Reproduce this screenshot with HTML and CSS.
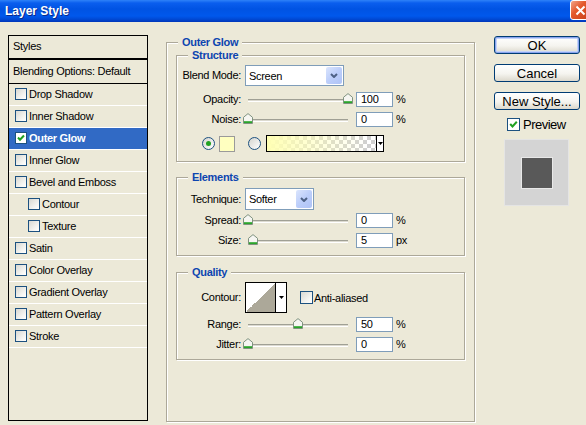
FILE: index.html
```html
<!doctype html>
<html lang="en">
  <head>
    <meta charset="UTF-8" />
    <meta name="viewport" content="width=device-width, initial-scale=1.0" />
    <title>Layer Style</title>
    <link rel="stylesheet" href="styles.css">
  </head>

  <body>
    <!-- Title bar -->
    <div class="titlebar">
      <span class="title">Layer Style</span>
      <span class="close">
        <svg width="11" height="11" viewBox="0 0 11 11"><path d="M1.5 1.5L9.5 9.5M9.5 1.5L1.5 9.5" stroke="#fff" stroke-width="2"/></svg>
      </span>
    </div>

    <div class="content">
      <!-- Styles list -->
      <ul class="styles-list">
        <li class="head first">Styles</li>
        <li class="head blending">Blending Options: Default</li>
        <li class="item"><span class="check"></span>Drop Shadow</li>
        <li class="item"><span class="check"></span>Inner Shadow</li>
        <li class="item selected">
          <span class="check on"><svg width="8" height="8" viewBox="0 0 8 8"><path d="M1 3.5L3 5.8L7 1.5" fill="none" stroke="#21a121" stroke-width="2"/></svg></span>Outer Glow
        </li>
        <li class="item"><span class="check"></span>Inner Glow</li>
        <li class="item"><span class="check"></span>Bevel and Emboss</li>
        <li class="item sub"><span class="check"></span>Contour</li>
        <li class="item sub"><span class="check"></span>Texture</li>
        <li class="item"><span class="check"></span>Satin</li>
        <li class="item"><span class="check"></span>Color Overlay</li>
        <li class="item"><span class="check"></span>Gradient Overlay</li>
        <li class="item"><span class="check"></span>Pattern Overlay</li>
        <li class="item"><span class="check"></span>Stroke</li>
      </ul>

      <!-- Outer Glow settings -->
      <div class="group main">
        <div class="group-title">Outer Glow</div>

        <!-- Structure -->
        <div class="group structure">
          <div class="group-title">Structure</div>

          <div class="row select-row">
            <span class="label">Blend Mode:</span>
            <span class="select blend">
              <span class="value">Screen</span>
              <span class="drop"><svg width="8" height="5" viewBox="0 0 8 5"><path d="M1 1L4 4L7 1" fill="none" stroke="#4d6185" stroke-width="2"/></svg></span>
            </span>
          </div>

          <div class="row gap3">
            <span class="label">Opacity:</span>
            <span class="slider">
              <span class="track"></span>
              <span class="thumb" style="left: 100px"><svg width="10" height="11" viewBox="0 0 10 11"><path d="M0.5 10.5V4.3L5 0.6L9.5 4.3V10.5Z" fill="#f6f6f2" stroke="#7f927f"/><path d="M1 8.2H9V10H1Z" fill="#2aa52a"/></svg></span>
            </span>
            <span class="field">100</span>
            <span class="unit">%</span>
          </div>

          <div class="row">
            <span class="label">Noise:</span>
            <span class="slider">
              <span class="track"></span>
              <span class="thumb" style="left: 0px"><svg width="10" height="11" viewBox="0 0 10 11"><path d="M0.5 10.5V4.3L5 0.6L9.5 4.3V10.5Z" fill="#f6f6f2" stroke="#7f927f"/><path d="M1 8.2H9V10H1Z" fill="#2aa52a"/></svg></span>
            </span>
            <span class="field">0</span>
            <span class="unit">%</span>
          </div>

          <div class="row color-row">
            <span class="radio on"></span>
            <span class="swatch"></span>
            <span class="radio second"></span>
            <span class="gradient-box">
              <span class="gradient"></span>
              <span class="arrow"><svg width="5" height="3" viewBox="0 0 5 3"><path d="M0 0H5L2.5 3Z" fill="#000"/></svg></span>
            </span>
          </div>
        </div>

        <!-- Elements -->
        <div class="group elements">
          <div class="group-title">Elements</div>

          <div class="row select-row tall">
            <span class="label">Technique:</span>
            <span class="select technique">
              <span class="value">Softer</span>
              <span class="drop"><svg width="8" height="5" viewBox="0 0 8 5"><path d="M1 1L4 4L7 1" fill="none" stroke="#4d6185" stroke-width="2"/></svg></span>
            </span>
          </div>

          <div class="row">
            <span class="label">Spread:</span>
            <span class="slider">
              <span class="track"></span>
              <span class="thumb" style="left: 0px"><svg width="10" height="11" viewBox="0 0 10 11"><path d="M0.5 10.5V4.3L5 0.6L9.5 4.3V10.5Z" fill="#f6f6f2" stroke="#7f927f"/><path d="M1 8.2H9V10H1Z" fill="#2aa52a"/></svg></span>
            </span>
            <span class="field">0</span>
            <span class="unit">%</span>
          </div>

          <div class="row">
            <span class="label">Size:</span>
            <span class="slider">
              <span class="track"></span>
              <span class="thumb" style="left: 5px"><svg width="10" height="11" viewBox="0 0 10 11"><path d="M0.5 10.5V4.3L5 0.6L9.5 4.3V10.5Z" fill="#f6f6f2" stroke="#7f927f"/><path d="M1 8.2H9V10H1Z" fill="#2aa52a"/></svg></span>
            </span>
            <span class="field">5</span>
            <span class="unit">px</span>
          </div>
        </div>

        <!-- Quality -->
        <div class="group quality">
          <div class="group-title">Quality</div>

          <div class="row contour-row">
            <span class="label">Contour:</span>
            <span class="contour">
              <span class="curve"></span>
              <span class="arrow"><svg width="5" height="3" viewBox="0 0 5 3"><path d="M0 0H5L2.5 3Z" fill="#000"/></svg></span>
            </span>
            <span class="check big"></span>
            <span class="check-label">Anti-aliased</span>
          </div>

          <div class="row gap1">
            <span class="label">Range:</span>
            <span class="slider">
              <span class="track"></span>
              <span class="thumb" style="left: 50px"><svg width="10" height="11" viewBox="0 0 10 11"><path d="M0.5 10.5V4.3L5 0.6L9.5 4.3V10.5Z" fill="#f6f6f2" stroke="#7f927f"/><path d="M1 8.2H9V10H1Z" fill="#2aa52a"/></svg></span>
            </span>
            <span class="field">50</span>
            <span class="unit">%</span>
          </div>

          <div class="row">
            <span class="label">Jitter:</span>
            <span class="slider">
              <span class="track"></span>
              <span class="thumb" style="left: 0px"><svg width="10" height="11" viewBox="0 0 10 11"><path d="M0.5 10.5V4.3L5 0.6L9.5 4.3V10.5Z" fill="#f6f6f2" stroke="#7f927f"/><path d="M1 8.2H9V10H1Z" fill="#2aa52a"/></svg></span>
            </span>
            <span class="field">0</span>
            <span class="unit">%</span>
          </div>
        </div>
      </div>

      <!-- Buttons and preview -->
      <div class="side">
        <div class="btn default">OK</div>
        <div class="btn">Cancel</div>
        <div class="btn">New Style...</div>

        <div class="preview-toggle">
          <span class="check big on"><svg width="9" height="9" viewBox="0 0 9 9"><path d="M1.2 4L3.5 6.5L7.8 1.8" fill="none" stroke="#21a121" stroke-width="2"/></svg></span>
          <span class="preview-label">Preview</span>
        </div>

        <div class="preview">
          <div class="preview-swatch"></div>
        </div>
      </div>
    </div>
  </body>
</html>
```

FILE: styles.css
```css
* {
  box-sizing: border-box;
}

html,
body {
  margin: 0;
  padding: 0;
}

body {
  width: 586px;
  height: 425px;
  overflow: hidden;
  background: #ece9d8;
  color: #000;
  font-family: "Liberation Sans", Arial, sans-serif;
  font-size: 11px;
  letter-spacing: -0.3px;
}

/* Title bar */
.titlebar {
  display: flex;
  align-items: center;
  height: 22px;
  background: linear-gradient(#2e82f8 0, #0a5eee 3px, #0053e3 9px, #0058ec 16px, #004ad6 19px, #0036b9 22px);
}

.title {
  padding-left: 5px;
  line-height: 20px;
  color: #fff;
  font-size: 12px;
  font-weight: bold;
  letter-spacing: 0;
  text-shadow: 1px 1px 0 #0b2a8a;
}

.close {
  display: flex;
  align-items: center;
  justify-content: center;
  align-self: flex-start;
  width: 21px;
  height: 20px;
  margin-left: auto;
  margin-right: -5px;
  border: 1px solid #fff;
  border-radius: 3px;
  background: linear-gradient(135deg, #f2a58a 0%, #e4582c 40%, #c8401c 100%);
}

.content {
  display: flex;
  align-items: flex-start;
  padding: 13px 0 0 8px;
}

/* Styles list */
.styles-list {
  flex: none;
  width: 140px;
  height: 386px;
  margin: 0;
  padding: 0;
  list-style: none;
  border: 1px solid #000;
}

.head {
  display: flex;
  align-items: center;
  height: 24px;
  padding: 0 0 2px 4px;
  border-bottom: 1px solid #000;
}

.head.first {
  border-bottom-width: 2px;
}

.item {
  display: flex;
  align-items: center;
  height: 22px;
  padding: 0 0 1px 6px;
  border-bottom: 1px solid #fff;
}

.item.sub {
  padding-left: 19px;
}

.item.selected {
  background: #316ac5;
  color: #fff;
  font-weight: bold;
}

.check {
  flex: none;
  display: flex;
  align-items: center;
  justify-content: center;
  width: 12px;
  height: 12px;
  margin-right: 2px;
  border: 1px solid #1c5180;
  background: linear-gradient(135deg, #d8d8d2, #f6f6f3 70%, #fff);
}

.check.big {
  width: 13px;
  height: 13px;
}

.item.selected .check {
  background: #fff;
}

/* Group boxes */
.group {
  border: 1px solid #aca899;
  box-shadow: inset 1px 1px 0 #fff, 1px 1px 0 #fff;
}

.group-title {
  width: max-content;
  height: 13px;
  margin: -7px 0 0 11px;
  padding: 0 4px;
  line-height: 13px;
  background: #ece9d8;
  color: #0c45b0;
  font-weight: bold;
}

.main {
  flex: none;
  width: 309px;
  height: 380px;
  margin: 7px 0 0 18px;
  padding: 0 9px;
}

.main > .group-title {
  margin-left: 2px;
}

.structure {
  margin-top: 6px;
  padding-bottom: 9px;
}

.elements {
  margin-top: 15px;
  padding-bottom: 5px;
}

.quality {
  margin-top: 16px;
  padding-bottom: 5px;
}

/* Rows */
.row {
  display: flex;
  align-items: center;
  height: 20px;
}

.gap3 {
  margin-top: 3px;
}

.gap1 {
  margin-top: 1px;
}

.label {
  flex: none;
  width: 64px;
  padding-bottom: 1px;
  text-align: right;
}

.select-row {
  height: 21px;
  margin-top: 3px;
}

.select-row.tall {
  height: 22px;
  margin-top: 4px;
}

.select {
  display: flex;
  align-items: center;
  height: 100%;
  margin-left: 4px;
  padding: 1px;
  border: 1px solid #7f9db9;
  background: #fff;
}

.select .value {
  flex: 1;
  padding-left: 2px;
}

.select .drop {
  display: flex;
  align-items: center;
  justify-content: center;
  align-self: stretch;
  width: 16px;
  border-radius: 2px;
  background: linear-gradient(135deg, #dbe5fd, #bccefa 50%, #afc3f6);
}

.blend {
  width: 99px;
}

.technique {
  width: 69px;
}

/* Sliders */
.slider {
  position: relative;
  flex: none;
  width: 110px;
  height: 12px;
  margin-left: 2px;
}

.track {
  display: block;
  height: 3px;
  margin: 6px 5px 0;
  border-top: 1px solid #a0a095;
  border-bottom: 1px solid #fff;
  background: #dcdad0;
}

.thumb {
  position: absolute;
  top: 0;
  width: 10px;
  height: 11px;
}

.thumb svg {
  display: block;
}

.field {
  flex: none;
  width: 37px;
  height: 15px;
  margin-left: 3px;
  padding-left: 4px;
  line-height: 13px;
  border: 1px solid #7f9db9;
  background: #fff;
}

.unit {
  margin-left: 3px;
  padding-bottom: 1px;
}

/* Color row */
.color-row {
  height: 17px;
  margin-top: 6px;
  padding-left: 25px;
}

.radio {
  flex: none;
  display: flex;
  align-items: center;
  justify-content: center;
  width: 13px;
  height: 13px;
  border: 1px solid #1c5180;
  border-radius: 50%;
  background: linear-gradient(135deg, #d4d4ce, #fff);
}

.radio.on::after {
  content: "";
  width: 5px;
  height: 5px;
  border-radius: 50%;
  background: #21a121;
}

.radio.second {
  margin-left: 13px;
}

.swatch {
  flex: none;
  width: 16px;
  height: 16px;
  margin-left: 4px;
  border: 1px solid #9a9a9a;
  background: #ffffc0;
}

.gradient-box {
  display: flex;
  width: 118px;
  height: 17px;
  margin-left: 5px;
  border: 1px solid #000;
}

.gradient {
  flex: 1;
  background:
    linear-gradient(to right, #ffffb4, rgba(255, 255, 180, 0) 92%),
    repeating-conic-gradient(#d0d0d0 0 25%, #fff 0 50%) 0 0 / 8px 8px;
}

.arrow {
  display: flex;
  align-items: center;
  justify-content: center;
  border-left: 1px solid #000;
  background: #fff;
}

.gradient-box .arrow {
  width: 7px;
}

/* Contour row */
.contour-row {
  height: 31px;
  margin-top: 3px;
}

.contour {
  display: flex;
  flex: none;
  width: 42px;
  height: 31px;
  margin-left: 4px;
  border: 1px solid #000;
}

.curve {
  flex: 1;
  background: linear-gradient(to top left, #aca899 50%, #fff 50%);
}

.contour .arrow {
  width: 11px;
}

.contour-row .check {
  margin-left: 13px;
  margin-right: 1px;
}

/* Buttons and preview */
.side {
  flex: none;
  width: 86px;
  margin: 1px 0 0 19px;
}

.btn {
  display: flex;
  align-items: center;
  justify-content: center;
  height: 18px;
  margin-bottom: 10px;
  border: 1px solid #003c74;
  border-radius: 3px;
  background: linear-gradient(#fff, #f5f4ef 55%, #dcd8cc);
  font-size: 13px;
  letter-spacing: 0;
}

.btn.default {
  box-shadow: inset 0 0 0 1px #8aa4ee, inset 0 0 0 2px #c4d4f8;
}

.preview-toggle {
  display: flex;
  align-items: center;
  height: 13px;
  margin-top: -2px;
  padding-left: 13px;
}

.preview-toggle .check {
  margin-right: 3px;
  background: #fff;
}

.preview-label {
  font-size: 13px;
  letter-spacing: -0.5px;
}

.preview {
  display: flex;
  align-items: center;
  justify-content: center;
  width: 65px;
  height: 67px;
  margin: 8px 0 0 10px;
  border: 1px solid #e4e4e4;
  background: #d4d4d4;
}

.preview-swatch {
  width: 32px;
  height: 32px;
  border: 1px solid #e8e8e8;
  background: #595959;
}
```
